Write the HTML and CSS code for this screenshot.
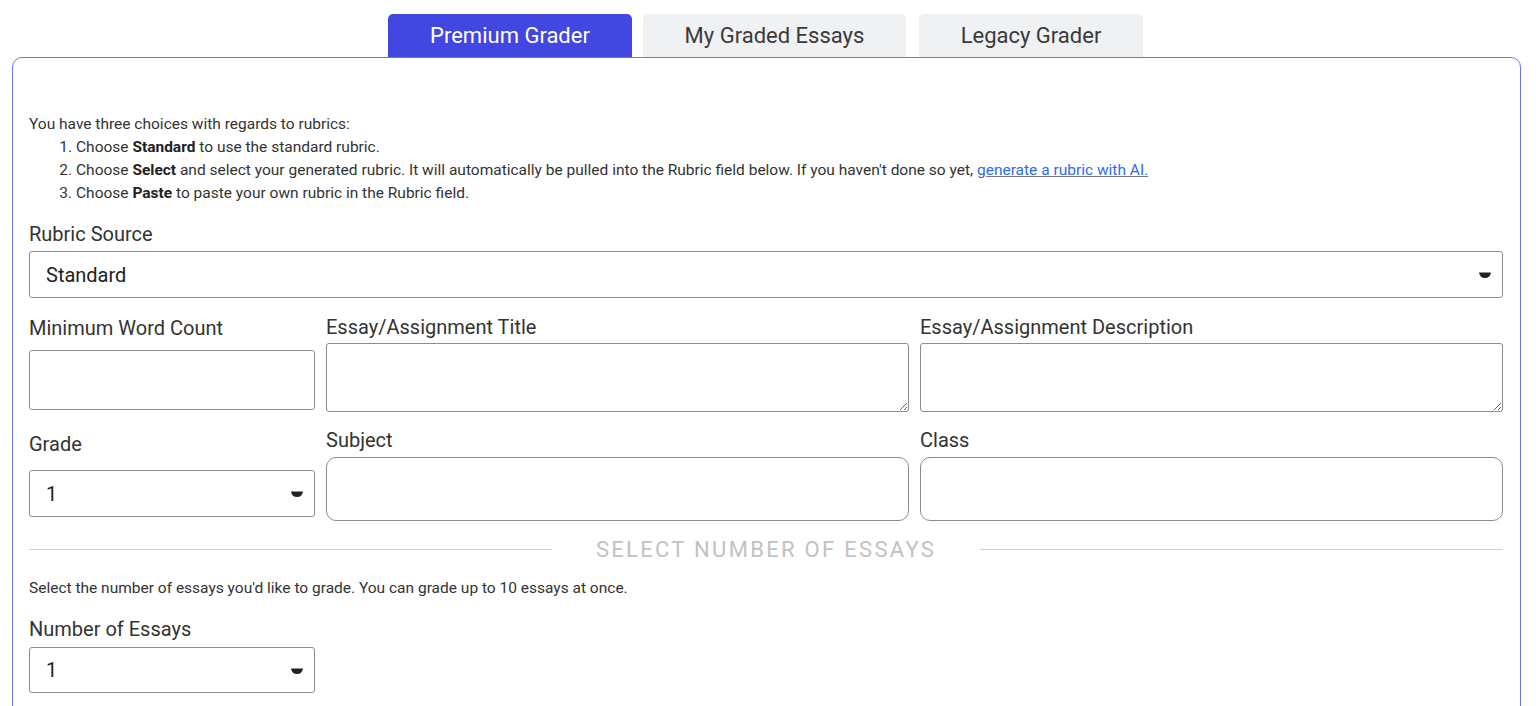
FILE: index.html
```html
<!DOCTYPE html>
<html>
<head>
<meta charset="utf-8">
<link rel="stylesheet" href="styles.css">
</head>
<body>
<div class="page">
  <nav class="tabs">
    <button class="tab active">Premium Grader</button>
    <button class="tab tab-mid">My Graded Essays</button>
    <button class="tab tab-last">Legacy Grader</button>
  </nav>
  <main class="panel">
    <div class="intro">
      <p>You have three choices with regards to rubrics:</p>
      <ol>
        <li>Choose <b>Standard</b> to use the standard rubric.</li>
        <li>Choose <b>Select</b> and select your generated rubric. It will automatically be pulled into the Rubric field below. If you haven't done so yet, <a href="#">generate a rubric with AI.</a></li>
        <li>Choose <b>Paste</b> to paste your own rubric in the Rubric field.</li>
      </ol>
    </div>

    <div class="field">
      <label class="lbl">Rubric Source</label>
      <div class="select-wrap">
        <select class="ctl select"><option>Standard</option></select>
        <svg class="caret" width="12" height="6" viewBox="0 0 12 6"><path d="M0 0.5 H12 Q11 6 6 6 Q1 6 0 0.5Z" fill="#222"/></svg>
      </div>
    </div>

    <div class="grid row2">
      <div class="field f-wc">
        <label class="lbl">Minimum Word Count</label>
        <input class="ctl input-wc" type="text">
      </div>
      <div class="field">
        <label class="lbl">Essay/Assignment Title</label>
        <textarea class="ctl area"></textarea>
      </div>
      <div class="field">
        <label class="lbl">Essay/Assignment Description</label>
        <textarea class="ctl area"></textarea>
      </div>
    </div>

    <div class="grid row3">
      <div class="field f-grade">
        <label class="lbl">Grade</label>
        <div class="select-wrap">
          <select class="ctl select"><option>1</option></select>
          <svg class="caret" width="12" height="6" viewBox="0 0 12 6"><path d="M0 0.5 H12 Q11 6 6 6 Q1 6 0 0.5Z" fill="#222"/></svg>
        </div>
      </div>
      <div class="field">
        <label class="lbl">Subject</label>
        <input class="ctl round" type="text">
      </div>
      <div class="field">
        <label class="lbl">Class</label>
        <input class="ctl round" type="text">
      </div>
    </div>

    <div class="divider"><span class="line"></span><span class="dtext">SELECT NUMBER OF ESSAYS</span><span class="line"></span></div>

    <p class="note">Select the number of essays you'd like to grade. You can grade up to 10 essays at once.</p>

    <div class="field num">
      <label class="lbl">Number of Essays</label>
      <div class="select-wrap">
        <select class="ctl select sel-num"><option>1</option></select>
        <svg class="caret" width="12" height="6" viewBox="0 0 12 6"><path d="M0 0.5 H12 Q11 6 6 6 Q1 6 0 0.5Z" fill="#222"/></svg>
      </div>
    </div>
  </main>
</div>
</body>
</html>
```
FILE: styles.css
```css
* { box-sizing: border-box; }
html, body { margin: 0; padding: 0; background: #fff; }
body { font-family: Roboto, "Liberation Sans", Arial, sans-serif; color: #333; overflow: hidden; }
.page { padding: 14px 15px 0 12px; }

.tabs { display: flex; justify-content: flex-start; padding-left: 376px; }
.tab {
  font-family: Roboto, "Liberation Sans", Arial, sans-serif;
  font-size: 22px; height: 43px; border: none; border-radius: 5px 5px 0 0;
  background: #f0f1f3; color: #3a3a3a; padding: 0; cursor: pointer;
}
.tab.active { background: #4147e0; color: #fff; width: 244px; }
.tab-mid { width: 263px; margin-left: 11px; }
.tab-last { width: 224px; margin-left: 13px; }

.panel {
  border: 1px solid #6f73f2; border-radius: 10px;
  padding: 55px 17px 40px 16px;
  height: 680px;
}
.intro { font-size: 15.5px; line-height: 23px; color: #333; }
.intro p { margin: 0; }
.intro ol { margin: 0; padding-left: 47px; }
.intro b { font-weight: 700; color: #222; }
.intro a { color: #2f6bf0; text-decoration: underline; text-decoration-color: #777; }

.field { display: flex; flex-direction: column; }
.lbl { font-size: 20px; color: #333; line-height: 22px; }

.intro + .field { margin-top: 18px; }
.intro + .field .lbl { margin-bottom: 6px; }

.ctl {
  font-family: Roboto, "Liberation Sans", Arial, sans-serif;
  font-size: 20px; color: #222; background: #fff;
  border: 1px solid #8a8d91; border-radius: 3px; outline: none; width: 100%;
}
.select-wrap { position: relative; }
.select { appearance: none; -webkit-appearance: none; height: 47px; padding: 0 16px; }
.caret { position: absolute; right: 12px; top: 21px; }

.grid { display: grid; grid-template-columns: 286px 1fr 1fr; column-gap: 11px; }
.row2 { margin-top: 18px; align-items: start; }
.row2 .lbl { margin-bottom: 5px; }
.row2 .f-wc { padding-top: 1px; }
.row2 .f-wc .lbl { margin-bottom: 11px; }
.input-wc { height: 60px; }
.area { height: 69px; resize: vertical; display: block; }

.row3 { margin-top: 17px; align-items: start; }
.row3 .lbl { margin-bottom: 6px; }
.row3 .f-grade { padding-top: 4px; }
.row3 .f-grade .lbl { margin-bottom: 15px; }
.round { height: 64px; border-radius: 10px; }

.divider { display: flex; align-items: center; margin-top: 16px; height: 24px; }
.line { flex: 1; height: 1px; background: #d0d0d0; }
.dtext { font-size: 22px; letter-spacing: 2.3px; color: #c2c2c2; padding: 0 44px; }

.note { font-size: 15.5px; color: #333; margin: 17px 0 0; line-height: 20px; }
.num { width: 286px; margin-top: 20px; }
.num .lbl { margin-bottom: 7px; }
.sel-num { height: 46px; }
```
